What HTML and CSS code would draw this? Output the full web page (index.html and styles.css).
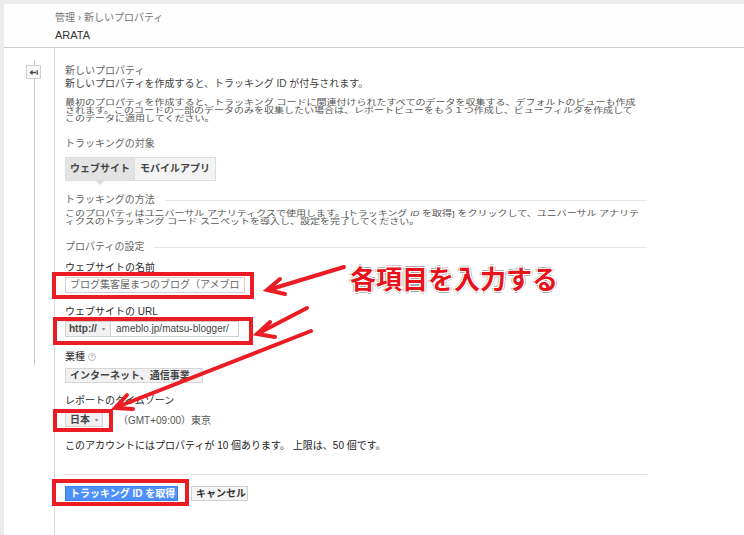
FILE: index.html
```html
<!DOCTYPE html>
<html lang="ja">
<head>
<meta charset="utf-8">
<title>新しいプロパティ</title>
<link rel="stylesheet" href="styles.css">
</head>
<body>
<div class="page">
  <header class="head">
    <div class="crumb">管理 › 新しいプロパティ</div>
    <div class="acct">ARATA</div>
  </header>
  <div class="row">
    <aside class="rail">
      <span class="rail-top"></span>
      <span class="back">
        <svg width="9" height="7" viewBox="0 0 9 7"><path d="M0.5 3.5 L3.5 0.8 L3.5 2.7 L7.2 2.7 L7.2 4.3 L3.5 4.3 L3.5 6.2 Z" fill="#444"/><rect x="7.6" y="1.2" width="1.2" height="4.6" fill="#444"/></svg>
      </span>
      <span class="rail-line"></span>
    </aside>
    <main class="main">
      <div class="sec-title">新しいプロパティ</div>
      <div class="lead">新しいプロパティを作成すると、トラッキング ID が付与されます。</div>
      <p class="para p1">最初のプロパティを作成すると、トラッキング コードに関連付けられたすべてのデータを収集する、デフォルトのビューも作成<br>されます。このコードの一部のデータのみを収集したい場合は、レポートビューをもう１つ作成し、ビューフィルタを作成して<br>このデータに適用してください。</p>
      <div class="sub t-target">トラッキングの対象</div>
      <div class="tabs"><span class="tab on">ウェブサイト</span><span class="tab">モバイルアプリ</span></div>
      <div class="rule-title t-method"><span>トラッキングの方法</span></div>
      <p class="para p2">このプロパティはユニバーサル アナリティクスで使用します。[トラッキング <i>ID</i> を取得] をクリックして、ユニバーサル アナリテ<br>ィクスのトラッキング コード スニペットを導入し、設定を完了してください。</p>
      <div class="rule-title t-prop"><span>プロパティの設定</span></div>

      <div class="flabel f-name">ウェブサイトの名前</div>
      <div class="frow r-name"><span class="mark m-name"><span class="input w-name">ブログ集客屋まつのブログ（アメブロ</span></span></div>

      <div class="flabel f-url">ウェブサイトの URL</div>
      <div class="frow r-url"><span class="mark m-url"><span class="select">http:// <b class="caret">▾</b></span><span class="input w-url">ameblo.jp/matsu-blogger/</span></span></div>

      <div class="flabel f-ind">業種 <span class="help">?</span></div>
      <div class="frow r-ind"><span class="btn w-ind">インターネット、通信事業 <b class="caret">▾</b></span></div>

      <div class="flabel f-tz">レポートのタイムゾーン</div>
      <div class="frow r-tz"><span class="mark m-tz"><span class="btn w-tz">日本 <b class="caret">▾</b></span></span><span class="tz-text">（GMT+09:00）東京</span></div>

      <div class="count">このアカウントにはプロパティが 10 個あります。 上限は、50 個です。</div>
      <div class="sep"></div>
      <div class="frow r-act"><span class="mark m-go"><span class="btn primary">トラッキング ID を取得</span></span><span class="btn cancel">キャンセル</span></div>
    </main>
  </div>
  <svg class="notes" width="744" height="535" viewBox="0 0 744 535">
    <g stroke="#ec1c24" stroke-width="4" stroke-linecap="round" fill="none">
      <path d="M344 267 L268 290"/>
      <path d="M280 279 L267 290 L285 294"/>
      <path d="M307 308 L259 333"/>
      <path d="M270 322 L257 334 L275 337"/>
      <path d="M311 331 L117 407"/>
      <path d="M127 395 L115 408 L133 409"/>
    </g>
  </svg>
  <div class="callout">各項目を入力する</div>
</div>
</body>
</html>
```

FILE: styles.css
```css
* { box-sizing: border-box; }
html, body { margin: 0; padding: 0; }
body {
  width: 744px;
  height: 535px;
  overflow: hidden;
  background: #ececec;
  font-family: "Liberation Sans", "Noto Sans CJK JP", sans-serif;
  font-size: 10px;
  color: #444;
}
.page {
  position: relative;
  margin: 4px 0 0 4px;
  height: 531px;
  background: #fff;
}
.head {
  height: 44px;
  border-bottom: 1px solid #cfcfcf;
  padding: 7px 0 0 51px;
  background: #fdfdfd;
}
.crumb { line-height: 14px; color: #777; font-size: 10px; }
.acct { line-height: 14px; margin-top: 3px; color: #333; font-size: 11px; }

.row { display: flex; height: 487px; }
.rail {
  width: 50px;
  flex: none;
  display: flex;
  flex-direction: column;
  align-items: flex-start;
  padding: 12px 0 0 22px;
}
.rail-top { width: 1px; height: 5px; background: #ccc; margin-left: 8px; }
.back {
  width: 15px;
  height: 14px;
  border: 1px solid #cfcfcf;
  background: #f8f8f8;
  display: flex;
  align-items: center;
  justify-content: center;
}
.rail-line { width: 1px; height: 286px; background: #ccc; margin-left: 8px; }

.main {
  width: 593px;
  border-left: 1px solid #dcdcdc;
  padding: 17px 0 0 10px;
}
.sec-title { line-height: 12px; color: #666; }
.lead { line-height: 12px; margin-top: 1px; color: #444; }
.para {
  margin: 0;
  line-height: 10px;
  color: #555;
  white-space: nowrap;
  transform: scaleY(0.78);
  transform-origin: 0 0;
}
.p1 { margin-top: 9px; margin-bottom: -7px; }
.p2 { margin-top: 4px; margin-bottom: -4px; }
.para i { font-size: 9px; }
.sub { line-height: 12px; color: #666; }
.t-target { margin-top: 16px; }

.tabs { display: flex; margin-top: 7px; height: 24px; }
.tab {
  position: relative;
  height: 24px;
  line-height: 22px;
  padding: 0 4px;
  border: 1px solid #ddd;
  background: #f3f3f3;
  font-weight: bold;
  color: #444;
  white-space: nowrap;
}
.tab + .tab { border-left: none; padding: 0 5px; }
.tab.on { background: #e3e3e3; }
.tab.on::after {
  content: "";
  position: absolute;
  left: 30px;
  top: 23px;
  border-left: 4px solid transparent;
  border-right: 4px solid transparent;
  border-top: 4px solid #dcdcdc;
}

.rule-title { display: flex; align-items: center; line-height: 12px; color: #666; width: 582px; }
.rule-title::after { content: ""; flex: 1; height: 1px; background: #e6e6e6; margin-left: 10px; }
.t-method { margin-top: 13px; }
.t-prop { margin-top: 15px; }

.flabel { line-height: 12px; color: #2a2a2a; display: flex; align-items: center; }
.f-name { margin-top: 9px; }
.f-url { margin-top: 13px; }
.f-ind { margin-top: 14px; }
.f-tz { margin-top: 12px; }
.help {
  display: inline-block;
  width: 8px;
  height: 8px;
  margin-left: 3px;
  border: 1px solid #bbb;
  border-radius: 50%;
  font-size: 6px;
  line-height: 6px;
  text-align: center;
  color: #999;
}

.frow { display: flex; align-items: center; }
.r-name { margin-top: 3px; height: 16px; }
.r-url { margin-top: 3px; height: 16px; }
.r-ind { margin-top: 5px; height: 15px; }
.r-tz { margin-top: 5px; height: 15px; }
.r-act { margin-top: 11px; height: 15px; }

.mark { position: relative; display: flex; }
.mark::after {
  content: "";
  position: absolute;
  border: 4px solid #ec1c24;
}
.m-name::after { top: -5px; right: -9px; bottom: -6px; left: -13px; }
.m-url::after { top: -4px; right: -14px; bottom: -8px; left: -12px; }
.m-tz::after { top: -3px; right: -10px; bottom: -5px; left: -12px; }
.m-go::after { top: -7px; right: -11px; bottom: -5px; left: -13px; }

.input {
  display: block;
  height: 16px;
  border: 1px solid #cfcfcf;
  padding: 0 4px;
  line-height: 14px;
  color: #666;
  white-space: nowrap;
  overflow: hidden;
}
.w-name { width: 180px; }
.w-url { width: 129px; color: #444; padding-left: 5px; }
.select {
  display: block;
  width: 45px;
  height: 16px;
  border: 1px solid #cfcfcf;
  border-right: none;
  background: #f1f1f1;
  padding-left: 3px;
  line-height: 14px;
  font-weight: bold;
  color: #444;
}
.caret { font-size: 6px; color: #888; font-weight: normal; margin-left: 2px; vertical-align: 1px; }

.btn {
  display: block;
  height: 15px;
  line-height: 13px;
  border: 1px solid #d6d6d6;
  background: #f1f1f1;
  font-weight: bold;
  color: #444;
  padding: 0 4px;
  white-space: nowrap;
}
.w-ind { width: 138px; }
.w-tz { width: 38px; }
.tz-text { margin-left: 15px; color: #555; }

.count { margin-top: 13px; line-height: 12px; color: #222; }
.sep { margin-top: 22px; width: 583px; height: 1px; background: #e3e3e3; margin-left: -1px; }
.primary { width: 113px; background: #4d90fe; border-color: #3d7fe8; color: #fff; }
.cancel { width: 57px; margin-left: 13px; background: #f5f5f5; border-color: #d0d0d0; color: #333; }

.notes { position: absolute; left: -4px; top: -4px; pointer-events: none; }
.callout {
  position: absolute;
  left: 346px;
  top: 259px;
  font-family: "Noto Sans CJK JP", sans-serif;
  font-size: 26px;
  line-height: 30px;
  font-weight: bold;
  color: #e8121a;
  white-space: nowrap;
  text-shadow:
    1px 0 #fff, -1px 0 #fff, 0 1px #fff, 0 -1px #fff,
    1px 1px #fff, -1px -1px #fff, 1px -1px #fff, -1px 1px #fff,
    2px 0 #aaa, -2px 0 #aaa, 0 2px #aaa, 0 -2px #aaa;
}
```
